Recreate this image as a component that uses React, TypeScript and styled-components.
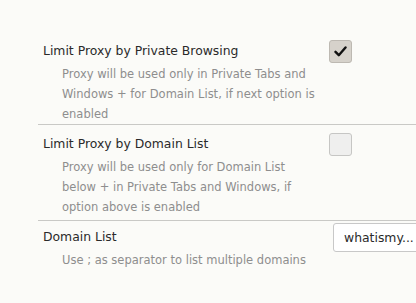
import React, { useState } from 'react';
import styled, { createGlobalStyle } from 'styled-components';

const GlobalStyle = createGlobalStyle`
	html, body {
		margin: 0;
		padding: 0;
		background: #fbfbf8;
		overflow: hidden;
	}
	body {
		font-family: 'DejaVu Sans', 'Liberation Sans', sans-serif;
	}
`;

const Page = styled.div`
	padding: 34px 0 0 38px;
	width: 378px;
`;

const Row = styled.div<{ $top: number; $bottom: number; $last?: boolean }>`
	display: grid;
	grid-template-columns: 274px 1fr;
	grid-template-rows: 26px auto;
	padding: ${(p) => p.$top}px 0 ${(p) => p.$bottom}px 5px;
	border-bottom: ${(p) => (p.$last ? 'none' : '1px solid #c9c9c6')};
`;

const Title = styled.div`
	grid-column: 1;
	grid-row: 1;
	font-size: 12.4px;
	line-height: 26px;
	color: #2a2a2a;
`;

const Description = styled.div`
	grid-column: 1;
	grid-row: 2;
	padding-left: 19px;
	font-size: 11.5px;
	line-height: 20px;
	color: #8e8e8e;
`;

const Control = styled.div`
	grid-column: 2;
	grid-row: 1;
	align-self: center;
	display: flex;
	align-items: center;
	padding-left: 12px;
`;

const Box = styled.button<{ $checked: boolean }>`
	width: 23px;
	height: 23px;
	padding: 0;
	border-radius: 3px;
	border: 1px solid ${(p) => (p.$checked ? '#bdb9b2' : '#c6c6c4')};
	background: ${(p) => (p.$checked ? '#d6d2cb' : '#efefee')};
	display: flex;
	align-items: center;
	justify-content: center;
	cursor: pointer;
`;

const TextInput = styled.input`
	margin-left: 4px;
	margin-right: -50px;
	width: 120px;
	height: 29px;
	box-sizing: border-box;
	border: 1px solid #c8c8c8;
	border-radius: 3px;
	background: #ffffff;
	padding: 0 10px;
	font-family: 'DejaVu Sans', sans-serif;
	font-size: 12.4px;
	color: #2a2a2a;
	outline: none;
`;

const Check = () => (
	<svg width="13" height="11" viewBox="0 0 13 11">
		<path d="M1.5 5.8 L4.8 9.2 L11.5 1.5" fill="none" stroke="#111" strokeWidth="2.4" strokeLinecap="round" strokeLinejoin="round" />
	</svg>
);

const Checkbox: React.FC<{ checked: boolean; onToggle: () => void }> = ({ checked, onToggle }) => (
	<Box $checked={checked} onClick={onToggle}>
		{checked ? <Check /> : null}
	</Box>
);

export default function App() {
	const [privateOnly, setPrivateOnly] = useState(true);
	const [domainOnly, setDomainOnly] = useState(false);
	const [domains, setDomains] = useState('whatismy...');

	return (
		<>
			<GlobalStyle />
			<Page>
				<Row $top={4} $bottom={0}>
					<Title>Limit Proxy by Private Browsing</Title>
					<Control>
						<Checkbox checked={privateOnly} onToggle={() => setPrivateOnly(!privateOnly)} />
					</Control>
					<Description>
						Proxy will be used only in Private Tabs and Windows + for Domain List, if next option is enabled
					</Description>
				</Row>
				<Row $top={6} $bottom={3}>
					<Title>Limit Proxy by Domain List</Title>
					<Control>
						<Checkbox checked={domainOnly} onToggle={() => setDomainOnly(!domainOnly)} />
					</Control>
					<Description>
						Proxy will be used only for Domain List below + in Private Tabs and Windows, if option above is enabled
					</Description>
				</Row>
				<Row $top={3} $bottom={0} $last>
					<Title>Domain List</Title>
					<Control>
						<TextInput value={domains} onChange={(e) => setDomains(e.target.value)} />
					</Control>
					<Description>Use ; as separator to list multiple domains</Description>
				</Row>
			</Page>
		</>
	);
}
